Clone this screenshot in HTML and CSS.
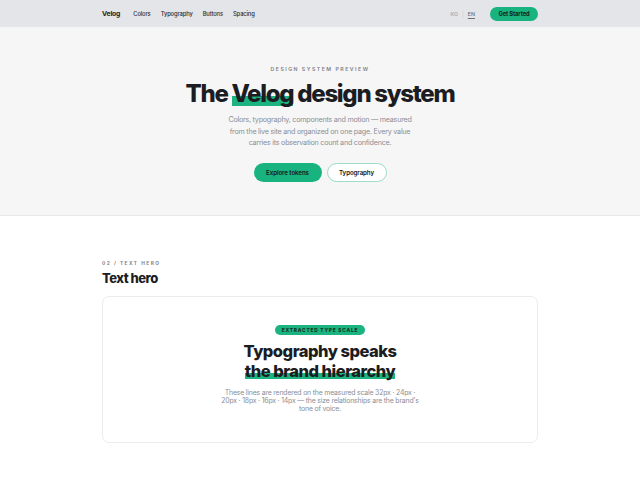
FILE: index.html
```html
<!DOCTYPE html>
<html lang="en">
<head>
<meta charset="utf-8">
<title>Velog design system</title>
<link rel="stylesheet" href="styles.css">
</head>
<body>
<header class="nav">
  <div class="wrap nav-inner">
    <div class="nav-left">
      <span class="logo">Velog</span>
      <nav class="links">
        <a>Colors</a><a>Typography</a><a>Buttons</a><a>Spacing</a>
      </nav>
    </div>
    <div class="nav-right">
      <span class="lang">KO</span><span class="sep">|</span><span class="lang active">EN</span>
      <a class="cta">Get Started</a>
    </div>
  </div>
</header>
<section class="hero">
  <p class="eyebrow">DESIGN SYSTEM PREVIEW</p>
  <h1 class="hero-title">The <span class="mark">Velog</span> design system</h1>
  <p class="hero-sub">Colors, typography, components and motion — measured from the live site and organized on one page. Every value carries its observation count and confidence.</p>
  <div class="actions">
    <a class="btn primary">Explore tokens</a>
    <a class="btn ghost">Typography</a>
  </div>
</section>
<section class="wrap section">
  <p class="kicker">02 / TEXT HERO</p>
  <h2 class="section-title">Text hero</h2>
  <div class="card">
    <span class="badge">EXTRACTED TYPE SCALE</span>
    <h3 class="card-title">Typography speaks<br><span class="mark">the brand hierarchy</span></h3>
    <p class="card-sub">These lines are rendered on the measured scale 32px · 24px · 20px · 18px · 16px · 14px — the size relationships are the brand's tone of voice.</p>
  </div>
</section>
</body>
</html>
```
FILE: styles.css
```css
* { box-sizing: border-box; }
html, body { margin: 0; padding: 0; }
body {
  font-family: Inter, "Noto Sans", sans-serif;
  color: #1d1f24;
  background: #ffffff;
}
.wrap { width: 436px; margin: 0 auto; }
.nav { background: #e3e5e9; height: 27px; }
.nav-inner { height: 27px; display: flex; align-items: center; justify-content: space-between; }
.nav-left { display: flex; align-items: center; gap: 13px; }
.logo { font-size: 6.8px; font-weight: 700; letter-spacing: -0.15px; color: #1b1d22; }
.links { display: flex; gap: 10px; }
.links a { font-size: 5.8px; color: #2a2d33; font-weight: 500; letter-spacing: -0.12px; }
.nav-right { display: flex; align-items: center; }
.lang { font-size: 5.3px; color: #a3a7ae; font-weight: 500; }
.lang.active { color: #6b7078; text-decoration: underline; text-underline-offset: 1.5px; }
.sep { font-size: 5.3px; color: #c4c7cc; margin: 0 4px; }
.cta {
  margin-left: 15px;
  background: #19b37f;
  color: #12231c;
  font-size: 5.8px; font-weight: 700; letter-spacing: -0.1px;
  height: 14px; width: 48px;
  border-radius: 7px;
  display: inline-flex; align-items: center; justify-content: center;
}
.hero {
  background: #f6f6f7;
  border-bottom: 1px solid #e8e8ea;
  height: 189px;
  display: flex; flex-direction: column; align-items: center;
  padding-top: 39px;
}
.eyebrow { margin: 0; font-size: 5.2px; letter-spacing: 1.5px; font-weight: 600; color: #7c8088; }
.hero-title {
  margin: 7px 0 0; font-size: 24px; font-weight: 800; letter-spacing: -1.3px;
  line-height: 30px; color: #1b1d22;
}
.mark {
  background: linear-gradient(to bottom, transparent 58%, #1bb380 58%, #1bb380 92%, transparent 92%);
}
.hero-sub {
  margin: 5px 0 0; width: 190px; text-align: center;
  font-size: 7.2px; line-height: 11.5px; color: #8a8e96; letter-spacing: -0.25px;
}
.actions { display: flex; gap: 5px; margin-top: 14px; }
.btn {
  height: 19px; border-radius: 10px; display: inline-flex; align-items: center; justify-content: center;
  font-size: 6.2px; font-weight: 600; color: #15191e; letter-spacing: -0.1px;
}
.btn.primary { background: #19b37f; width: 68px; }
.btn.ghost { background: #fff; border: 1px solid #9fdcc4; width: 60px; }
.section { padding-top: 44px; }
.kicker { margin: 0; font-size: 4.8px; letter-spacing: 1.5px; font-weight: 700; color: #7e828a; }
.section-title { margin: 3px 0 0; font-size: 13px; font-weight: 800; letter-spacing: -0.5px; line-height: 18px; color: #1b1d22; }
.card {
  margin-top: 9px;
  border: 1px solid #ececee; border-radius: 7px;
  height: 147px;
  display: flex; flex-direction: column; align-items: center;
  padding-top: 28px;
}
.badge {
  background: #1bb380; color: #173326;
  font-size: 4.8px; font-weight: 800; letter-spacing: 0.8px;
  height: 10px; padding: 0 7px; border-radius: 5px;
  display: inline-flex; align-items: center;
}
.card-title {
  margin: 6px 0 0; text-align: center;
  font-size: 16.5px; line-height: 20px; font-weight: 800; letter-spacing: -0.5px; color: #1b1d22;
}
.card-sub {
  margin: 8px 0 0; width: 204px; text-align: center;
  font-size: 6.9px; line-height: 8px; color: #8a8e96; letter-spacing: -0.18px;
}
```
